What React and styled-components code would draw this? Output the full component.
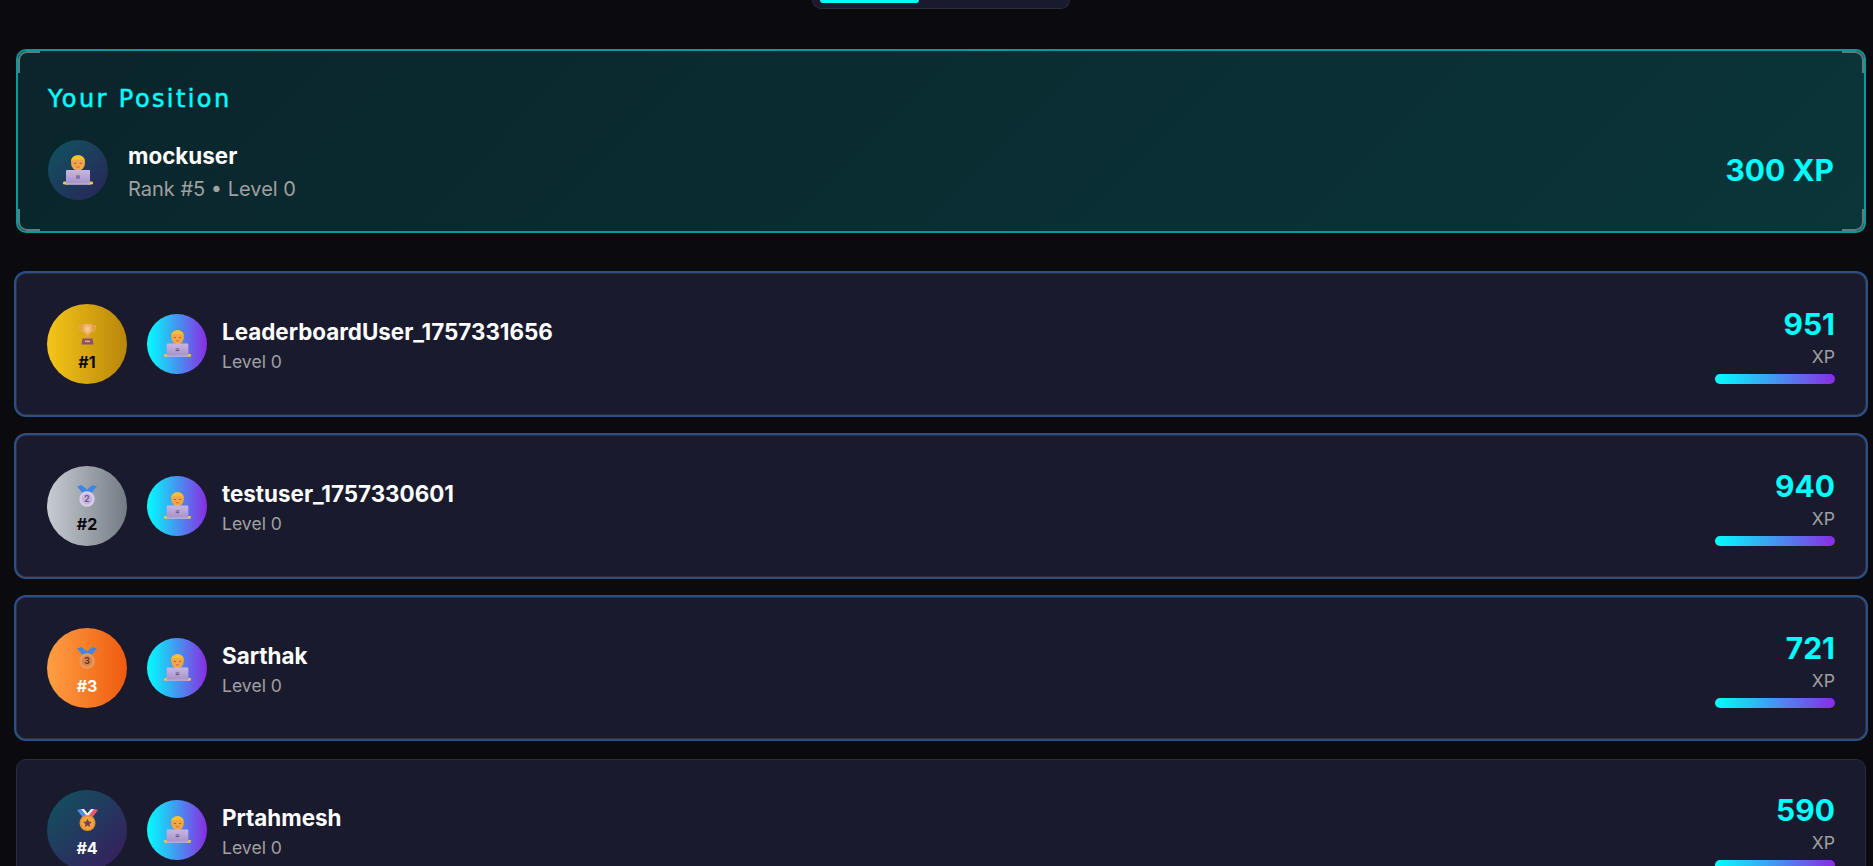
import React from 'react';
import styled, { createGlobalStyle } from 'styled-components';

const GlobalStyle = createGlobalStyle`
  html, body {
    margin: 0;
    height: 100%;
    overflow: hidden;
    background: #0a0a0f;
    font-family: Inter, "Liberation Sans", sans-serif;
    color: #fff;
  }
`;

const Page = styled.div`
  height: 866px;
  overflow: hidden;
  padding: 0 7px 0 16px;
`;

const TabStrip = styled.div`
  width: 258px;
  height: 9px;
  margin: 0 auto 40px;
  padding: 0 7px;
  box-sizing: border-box;
  background: #1a1a2e;
  border: 1px solid #2c2c3a;
  border-top: none;
  border-radius: 0 0 10px 10px;
`;

const ActiveTab = styled.div`
  width: 99px;
  height: 3px;
  background: #00ffff;
  border-radius: 0 0 8px 8px;
`;

const PositionCard = styled.section`
  position: relative;
  height: 184px;
  box-sizing: border-box;
  padding: 30px;
  margin-bottom: 40px;
  border: 2px solid #059a9c;
  border-radius: 10px;
  background: linear-gradient(135deg, #0a252b 0%, #0a3539 100%);
`;

const Corner = styled.span`
  position: absolute;
  width: 20px;
  height: 20px;
  border: 0 solid #5d7c7e;
  ${p => (p.$v === 'top' ? 'top: 0; border-top-width: 2px;' : 'bottom: 0; border-bottom-width: 2px;')}
  ${p => (p.$h === 'left' ? 'left: 0; border-left-width: 2px;' : 'right: 0; border-right-width: 2px;')}
  border-${p => p.$v}-${p => p.$h}-radius: 9px;
`;

const PositionTitle = styled.h2`
  margin: 0 0 19px;
  font-family: "DejaVu Sans", sans-serif;
  font-size: 24px;
  line-height: 36px;
  font-weight: 400;
  letter-spacing: 2.4px;
  -webkit-text-stroke: 0.5px #00ffff;
  color: #00ffff;
`;

const Row = styled.div`
  display: flex;
  align-items: center;
  justify-content: space-between;
`;

const Identity = styled.div`
  display: flex;
  align-items: center;
  gap: ${p => p.$gap}px;
`;

const Avatar = styled.div`
  width: 60px;
  height: 60px;
  border-radius: 50%;
  display: flex;
  align-items: center;
  justify-content: center;
  background: ${p => (p.$dim
    ? 'linear-gradient(135deg, #0f5560, #2a2358)'
    : 'linear-gradient(90deg, #00ffff, #8a2be2)')};
`;

const NameBlock = styled.div`
  padding-top: ${p => p.$shift}px;
`;

const Name = styled.div`
  font-size: 22.4px;
  line-height: 33.6px;
  font-weight: 700;
  color: #fff;
`;

const Sub = styled.div`
  font-size: ${p => p.$size}px;
  line-height: 1.6;
  color: #a0a0a0;
`;

const XpTotal = styled.div`
  font-size: 30px;
  font-weight: 700;
  color: #00ffff;
`;

const List = styled.div`
  display: flex;
  flex-direction: column;
  gap: 20px;
`;

const Card = styled.article`
  display: flex;
  align-items: center;
  justify-content: space-between;
  box-sizing: border-box;
  height: 142px;
  flex-shrink: 0;
  padding: 30px;
  background: #1a1a2e;
  border: 1px solid #2c2c3a;
  border-radius: 10px;
  box-shadow: ${p => (p.$top ? '0 0 0 2px #2a5088' : 'none')};
`;

const RankBadge = styled.div`
  width: 80px;
  height: 80px;
  box-sizing: border-box;
  padding-top: 7px;
  border-radius: 50%;
  display: flex;
  flex-direction: column;
  align-items: center;
  justify-content: center;
  gap: 7px;
  flex-shrink: 0;
  background: ${p => p.$bg};
  color: ${p => p.$color};
`;

const RankLabel = styled.div`
  font-size: 16px;
  line-height: 20px;
  font-weight: 700;
`;

const Score = styled.div`
  display: flex;
  flex-direction: column;
  align-items: flex-end;
`;

const ScoreValue = styled.div`
  font-size: 30px;
  line-height: 39px;
  font-weight: 700;
  color: #00ffff;
`;

const ScoreUnit = styled.div`
  font-size: 17.6px;
  line-height: 24px;
  padding-top: 1px;
  margin-bottom: 5px;
  color: #a0a0a0;
`;

const ScoreBar = styled.div`
  width: 120px;
  height: 10px;
  border-radius: 5px;
  background: linear-gradient(90deg, #00ffff, #8a2be2);
`;

const PersonIcon = ({ size, id }) => (
  <svg width={size} height={size} viewBox="0 0 30 30">
    <defs>
      <linearGradient id={id} x1="0" y1="0" x2="0" y2="1">
        <stop offset="0" stopColor="#c9b6e4" />
        <stop offset="1" stopColor="#a691c8" />
      </linearGradient>
    </defs>
    <rect x="0" y="26.6" width="5" height="3" rx="1.4" fill="#f6c63f" />
    <rect x="25" y="26.6" width="5" height="3" rx="1.4" fill="#f6c63f" />
    <ellipse cx="15" cy="8" rx="7" ry="7.8" fill="#f3a54a" />
    <path d="M8 7C7.600 3 10.800.2 15 .2s7.400 2.800 7 6.800c-.6-1.500-1.500-2.400-2.800-2.800-2.400.7-5.600.7-7.900.2-1.500.5-2.600 1.300-3.300 2.600z" fill="#f8c22c" />
    <path d="M11 8.300h2.400M16.600 8.300H19" stroke="#a65a2c" strokeWidth="1" />
    <path d="M13.400 12h3.200" stroke="#b8562c" strokeWidth=".8" />
    <rect x="3" y="15" width="24" height="14" rx="1" fill={`url(#${id})`} />
    <rect x="3" y="28.300" width="24" height="1.500" fill="#bfb3d2" />
    <rect x="13" y="20.500" width="4" height="1.200" fill="#6d5c86" />
    <rect x="13" y="22.300" width="4" height="1.200" fill="#6d5c86" />
  </svg>
);

const TrophyIcon = () => (
  <svg width="19" height="22" viewBox="0 0 19 22">
    <defs>
      <radialGradient id="cup" cx=".5" cy=".35" r=".65">
        <stop offset="0" stopColor="#f8d296" />
        <stop offset="1" stopColor="#e08f3c" />
      </radialGradient>
    </defs>
    <path d="M4 3H1.500c0 3.500 1.200 5.300 4 5.800M15 3h2.500c0 3.500-1.200 5.300-4 5.800" fill="none" stroke="#eaa552" strokeWidth="1.400" />
    <path d="M3.500.800h12c.3 5.700-1.800 9-4.700 10.200v4.500H8.200V11C5.300 9.800 3.200 6.500 3.500.800z" fill="url(#cup)" />
    <path d="M4.500 15.500h10l1 6h-12z" fill="#8c4f72" />
    <rect x="7" y="17.600" width="5" height="1.500" fill="#e7b865" />
  </svg>
);

// top 3 medal: blue ribbon and a numbered disc
const RibbonMedal = ({ rim, fill, ink, digit }) => (
  <svg width="20" height="22" viewBox="0 0 20 22">
    <path d="M0 1.500 4.500 0 10 4.500 15.500 0 20 1.500 14 8.500H6z" fill="#3f86e8" />
    <circle cx="10" cy="14" r="7.700" fill={rim} />
    <circle cx="10" cy="14" r="5.400" fill={fill} />
    <text x="10" y="17" textAnchor="middle" fontFamily="Inter, sans-serif" fontSize="8.500" fontWeight="700" fill={ink}>{digit}</text>
  </svg>
);

const SportsMedal = () => (
  <svg width="21" height="22" viewBox="0 0 21 22">
    <path d="M0 1 4 0 10.500 8 7 10z" fill="#4f8ae6" />
    <path d="M4 0 7 0 12 6 10.500 8z" fill="#f5eef5" />
    <path d="M21 1 17 0 10.500 8 14 10z" fill="#ea5a6a" />
    <path d="M17 0 14 0 9 6 10.500 8z" fill="#f5eef5" />
    <circle cx="10.500" cy="14" r="8" fill="#e8932e" />
    <circle cx="10.500" cy="14" r="6.200" fill="#f2a63a" />
    <path d="M10.500 9.800l1.300 2.800 3 .3-2.200 2 .6 3-2.700-1.500-2.700 1.500.6-3-2.200-2 3-.3z" fill="#7a3f55" />
  </svg>
);

const players = [
  { name: 'LeaderboardUser_1757331656', xp: 951, icon: <TrophyIcon />, rank: 1, bg: 'linear-gradient(90deg, #f5c518, #b8860b)', color: '#0a0a0f' },
  { name: 'testuser_1757330601', xp: 940, icon: <RibbonMedal rim="#d9cdee" fill="#c5b4de" ink="#6b5a80" digit="2" />, rank: 2, bg: 'linear-gradient(90deg, #c8ccd2, #747b84)', color: '#0a0a0f' },
  { name: 'Sarthak', xp: 721, icon: <RibbonMedal rim="#e79a5e" fill="#d9854a" ink="#5c2f3a" digit="3" />, rank: 3, bg: 'linear-gradient(90deg, #ff9f43, #ee5a0e)', color: '#fff' },
  { name: 'Prtahmesh', xp: 590, icon: <SportsMedal />, rank: 4, bg: 'linear-gradient(135deg, #0f5560, #3a1a5c)', color: '#fff' },
];

const App = () => (
  <Page>
    <GlobalStyle />
    <TabStrip><ActiveTab /></TabStrip>

    <PositionCard>
      <Corner $v="top" $h="left" />
      <Corner $v="top" $h="right" />
      <Corner $v="bottom" $h="left" />
      <Corner $v="bottom" $h="right" />
      <PositionTitle>Your Position</PositionTitle>
      <Row>
        <Identity $gap={20}>
          <Avatar $dim><PersonIcon size={30} id="laptop-me" /></Avatar>
          <NameBlock $shift={3}>
            <Name>mockuser</Name>
            <Sub $size={20}>Rank #5 • Level 0</Sub>
          </NameBlock>
        </Identity>
        <XpTotal>300 XP</XpTotal>
      </Row>
    </PositionCard>

    <List>
      {players.map(p => (
        <Card key={p.rank} $top={p.rank < 4}>
          <Identity $gap={20}>
            <RankBadge $bg={p.bg} $color={p.color}>
              {p.icon}
              <RankLabel>#{p.rank}</RankLabel>
            </RankBadge>
            <Identity $gap={15}>
              <Avatar><PersonIcon size={27} id={`laptop-${p.rank}`} /></Avatar>
              <NameBlock $shift={3}>
                <Name>{p.name}</Name>
                <Sub $size={17.6}>Level 0</Sub>
              </NameBlock>
            </Identity>
          </Identity>
          <Score>
            <ScoreValue>{p.xp}</ScoreValue>
            <ScoreUnit>XP</ScoreUnit>
            <ScoreBar />
          </Score>
        </Card>
      ))}
    </List>
  </Page>
);

export default App;
